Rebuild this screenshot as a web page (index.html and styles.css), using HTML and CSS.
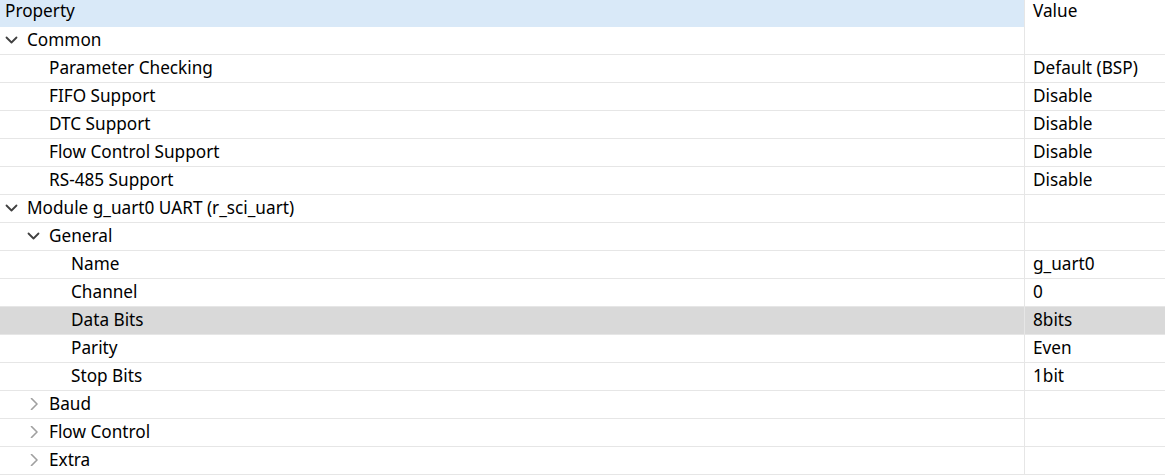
FILE: index.html
```html
<!DOCTYPE html>
<html>
<head>
<meta charset="utf-8">
<link rel="stylesheet" href="styles.css">
</head>
<body>
<div class="table">
  <div class="row head">
    <div class="prop">Property</div>
    <div class="val">Value</div>
  </div>
  <div class="row"><div class="prop l0"><svg class="chev" viewBox="0 0 22 12"><polyline class="open" points="1.5,3.5 6.5,8.5 11.5,3.5"/></svg>Common</div><div class="val"></div></div>
  <div class="row"><div class="prop l1"><span class="gap"></span>Parameter Checking</div><div class="val">Default (BSP)</div></div>
  <div class="row"><div class="prop l1"><span class="gap"></span>FIFO Support</div><div class="val">Disable</div></div>
  <div class="row"><div class="prop l1"><span class="gap"></span>DTC Support</div><div class="val">Disable</div></div>
  <div class="row"><div class="prop l1"><span class="gap"></span>Flow Control Support</div><div class="val">Disable</div></div>
  <div class="row"><div class="prop l1"><span class="gap"></span>RS-485 Support</div><div class="val">Disable</div></div>
  <div class="row"><div class="prop l0"><svg class="chev" viewBox="0 0 22 12"><polyline class="open" points="1.5,3.5 6.5,8.5 11.5,3.5"/></svg>Module g_uart0 UART (r_sci_uart)</div><div class="val"></div></div>
  <div class="row"><div class="prop l1"><svg class="chev" viewBox="0 0 22 12"><polyline class="open" points="1.5,3.5 6.5,8.5 11.5,3.5"/></svg>General</div><div class="val"></div></div>
  <div class="row"><div class="prop l2"><span class="gap"></span>Name</div><div class="val">g_uart0</div></div>
  <div class="row"><div class="prop l2"><span class="gap"></span>Channel</div><div class="val">0</div></div>
  <div class="row selected"><div class="prop l2"><span class="gap"></span>Data Bits</div><div class="val">8bits</div></div>
  <div class="row"><div class="prop l2"><span class="gap"></span>Parity</div><div class="val">Even</div></div>
  <div class="row"><div class="prop l2"><span class="gap"></span>Stop Bits</div><div class="val">1bit</div></div>
  <div class="row"><div class="prop l1"><svg class="chev" viewBox="0 0 22 12"><polyline class="closed" points="4.5,0.5 10,6 4.5,11.5"/></svg>Baud</div><div class="val"></div></div>
  <div class="row"><div class="prop l1"><svg class="chev" viewBox="0 0 22 12"><polyline class="closed" points="4.5,0.5 10,6 4.5,11.5"/></svg>Flow Control</div><div class="val"></div></div>
  <div class="row"><div class="prop l1"><svg class="chev" viewBox="0 0 22 12"><polyline class="closed" points="4.5,0.5 10,6 4.5,11.5"/></svg>Extra</div><div class="val"></div></div>
</div>
</body>
</html>
```
FILE: styles.css
```css
html, body {
  margin: 0;
  padding: 0;
  background: #ffffff;
}
body {
  font-family: "Noto Sans", "Open Sans", sans-serif;
  font-size: 17.2px;
  color: #000000;
}
.table {
  display: flex;
  flex-direction: column;
  width: 1165px;
}
.row {
  display: grid;
  grid-template-columns: 1024px 1fr;
  height: 27px;
  border-bottom: 1px solid #e6e6e6;
}
.row.head {
  height: 27px;
  border-bottom: none;
}
.row.head .prop,
.row.head .val {
  padding-bottom: 6px;
}
.row.head .prop {
  background: #d9e9f8;
  padding-left: 5px;
}
.prop, .val {
  display: flex;
  align-items: center;
  white-space: nowrap;
  line-height: 1;
  padding-bottom: 1px;
}
.val {
  border-left: 1px solid #e6e6e6;
  padding-left: 8px;
}
.row.selected {
  background: #d9d9d9;
}
.prop.l0 { padding-left: 5px; }
.prop.l1 { padding-left: 27px; }
.prop.l2 { padding-left: 49px; }
.gap {
  display: inline-block;
  width: 22px;
  flex: none;
}
.chev {
  width: 22px;
  height: 12px;
  flex: none;
  fill: none;
  stroke-linecap: round;
  stroke-linejoin: round;
}
.chev .open {
  stroke: #404040;
  stroke-width: 1.8;
}
.chev .closed {
  stroke: #a0a0a0;
  stroke-width: 1.6;
}
```
